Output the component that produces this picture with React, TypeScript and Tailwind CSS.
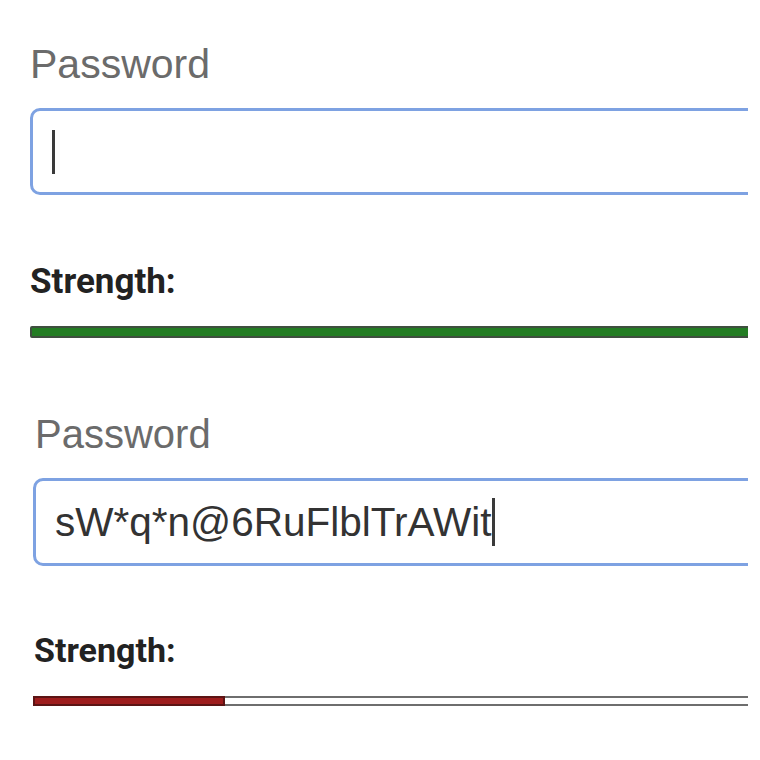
import React from "react";

export default function App() {
  return (
    <div className="w-[760px] h-[760px] bg-white overflow-hidden" style={{ fontFamily: '"Liberation Sans", Arial, sans-serif' }}>
      <div className="w-[748px] overflow-hidden">
        {/* First state */}
        <section className="pl-[30px] pt-[41px]">
          <div className="text-[41px] leading-[46px] text-[#6b6b6b]">Password</div>
          <div className="mt-[21px] h-[87px] w-[780px] border-[3px] border-[#7ea2e2] rounded-[10px] flex items-center pl-[19px]">
            <span className="block w-[3px] h-[44px] bg-[#3a3a3a]" />
          </div>
          <div className="mt-[67px] text-[35px] leading-[40px] font-bold text-[#222]" style={{ fontFamily: 'Roboto, "Liberation Sans", sans-serif' }}>
            Strength:
          </div>
          <div className="mt-[24px] h-[12px] w-[760px] border-2 border-[#3f4f3f] bg-[#237d23] rounded-[2px]" />
        </section>

        {/* Second state */}
        <section className="pl-[33px]">
          <div className="mt-[74px] pl-[2px] text-[40px] leading-[44px] text-[#6b6b6b]">Password</div>
          <div className="mt-[22px] h-[88px] w-[780px] border-[3px] border-[#7ea2e2] rounded-[10px] flex items-center pl-[19px]">
            <span className="text-[40.5px] leading-[46px] text-[#333]">sW*q*n@6RuFlblTrAWit</span>
            <span className="block w-[3px] h-[48px] bg-[#3a3a3a] ml-[1px]" />
          </div>
          <div className="mt-[65px] pl-[1px] text-[34px] leading-[38px] font-bold text-[#222]" style={{ fontFamily: 'Roboto, "Liberation Sans", sans-serif' }}>
            Strength:
          </div>
          <div className="mt-[27px] h-[10px] w-[760px] border-2 border-[#6e6e6e] bg-white flex">
            <div className="-my-[2px] -ml-[2px] h-[10px] w-[192px] border-2 border-[#5c1414] bg-[#9e1d1d]" />
          </div>
        </section>
      </div>
    </div>
  );
}
